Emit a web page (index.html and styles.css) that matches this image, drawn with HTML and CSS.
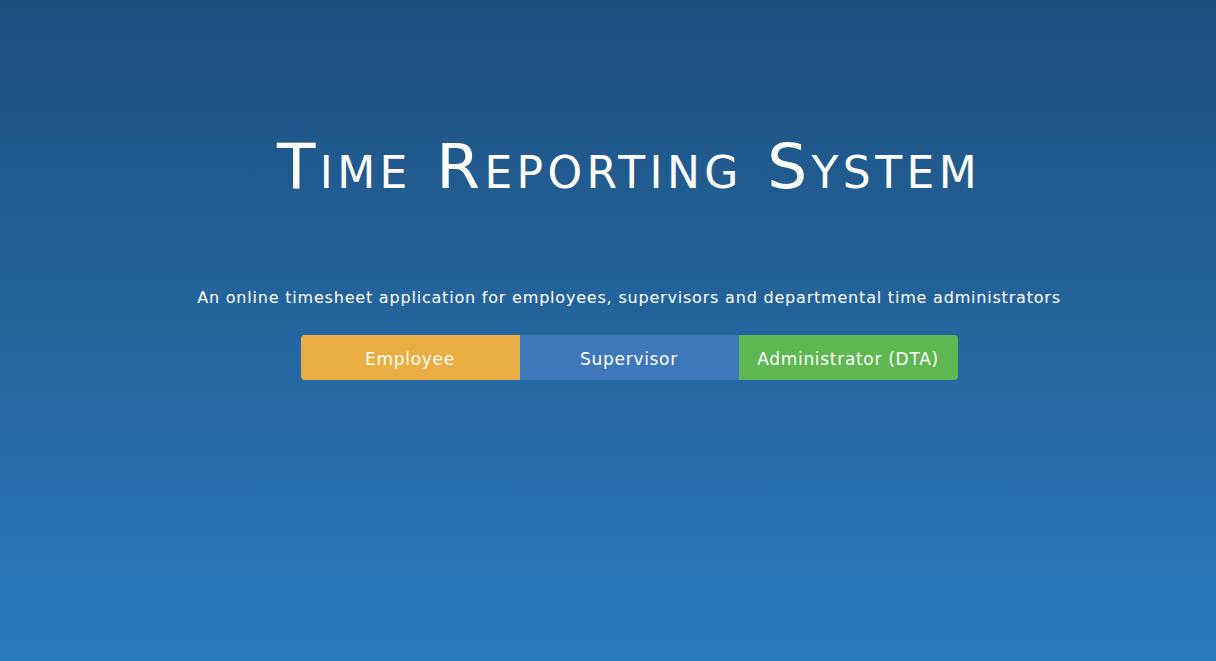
FILE: index.html
```html
<!DOCTYPE html>
<html lang="en">
<head>
<meta charset="utf-8">
<title>Time Reporting System</title>
<link rel="stylesheet" href="styles.css">
</head>
<body>
<main class="hero">
  <h1 class="title">Time Reporting System</h1>
  <p class="lead">An online timesheet application for employees, supervisors and departmental time administrators</p>
  <nav class="roles">
    <a class="role role-employee" href="#">Employee</a>
    <a class="role role-supervisor" href="#">Supervisor</a>
    <a class="role role-admin" href="#">Administrator (DTA)</a>
  </nav>
</main>
</body>
</html>
```
FILE: styles.css
```css
html, body {
  margin: 0;
  height: 100%;
}
body {
  background: linear-gradient(to bottom, #1d4f7e 0%, #2b7bbf 100%);
  font-family: "DejaVu Sans", Verdana, sans-serif;
  color: #fff;
}
.hero {
  display: flex;
  flex-direction: column;
  align-items: center;
  padding-top: 129px;
  padding-left: 42px;
}
.title {
  margin: 0;
  font-size: 63px;
  font-weight: normal;
  font-variant: small-caps;
  letter-spacing: 4.4px;
  line-height: 1.2;
}
.lead {
  margin: 82px 0 0;
  font-size: 16px;
  letter-spacing: 0.8px;
  line-height: 22px;
}
.roles {
  display: flex;
  margin-top: 26px;
  border-radius: 4px;
  overflow: hidden;
}
.role {
  box-sizing: border-box;
  width: 219px;
  height: 45px;
  padding-top: 4px;
  display: flex;
  align-items: center;
  justify-content: center;
  color: #fff;
  text-decoration: none;
  font-size: 17px;
  letter-spacing: 0.7px;
}
.role-employee { background: #e9ad41; }
.role-supervisor { background: #3e78bb; }
.role-admin { background: #5fb752; }
```
